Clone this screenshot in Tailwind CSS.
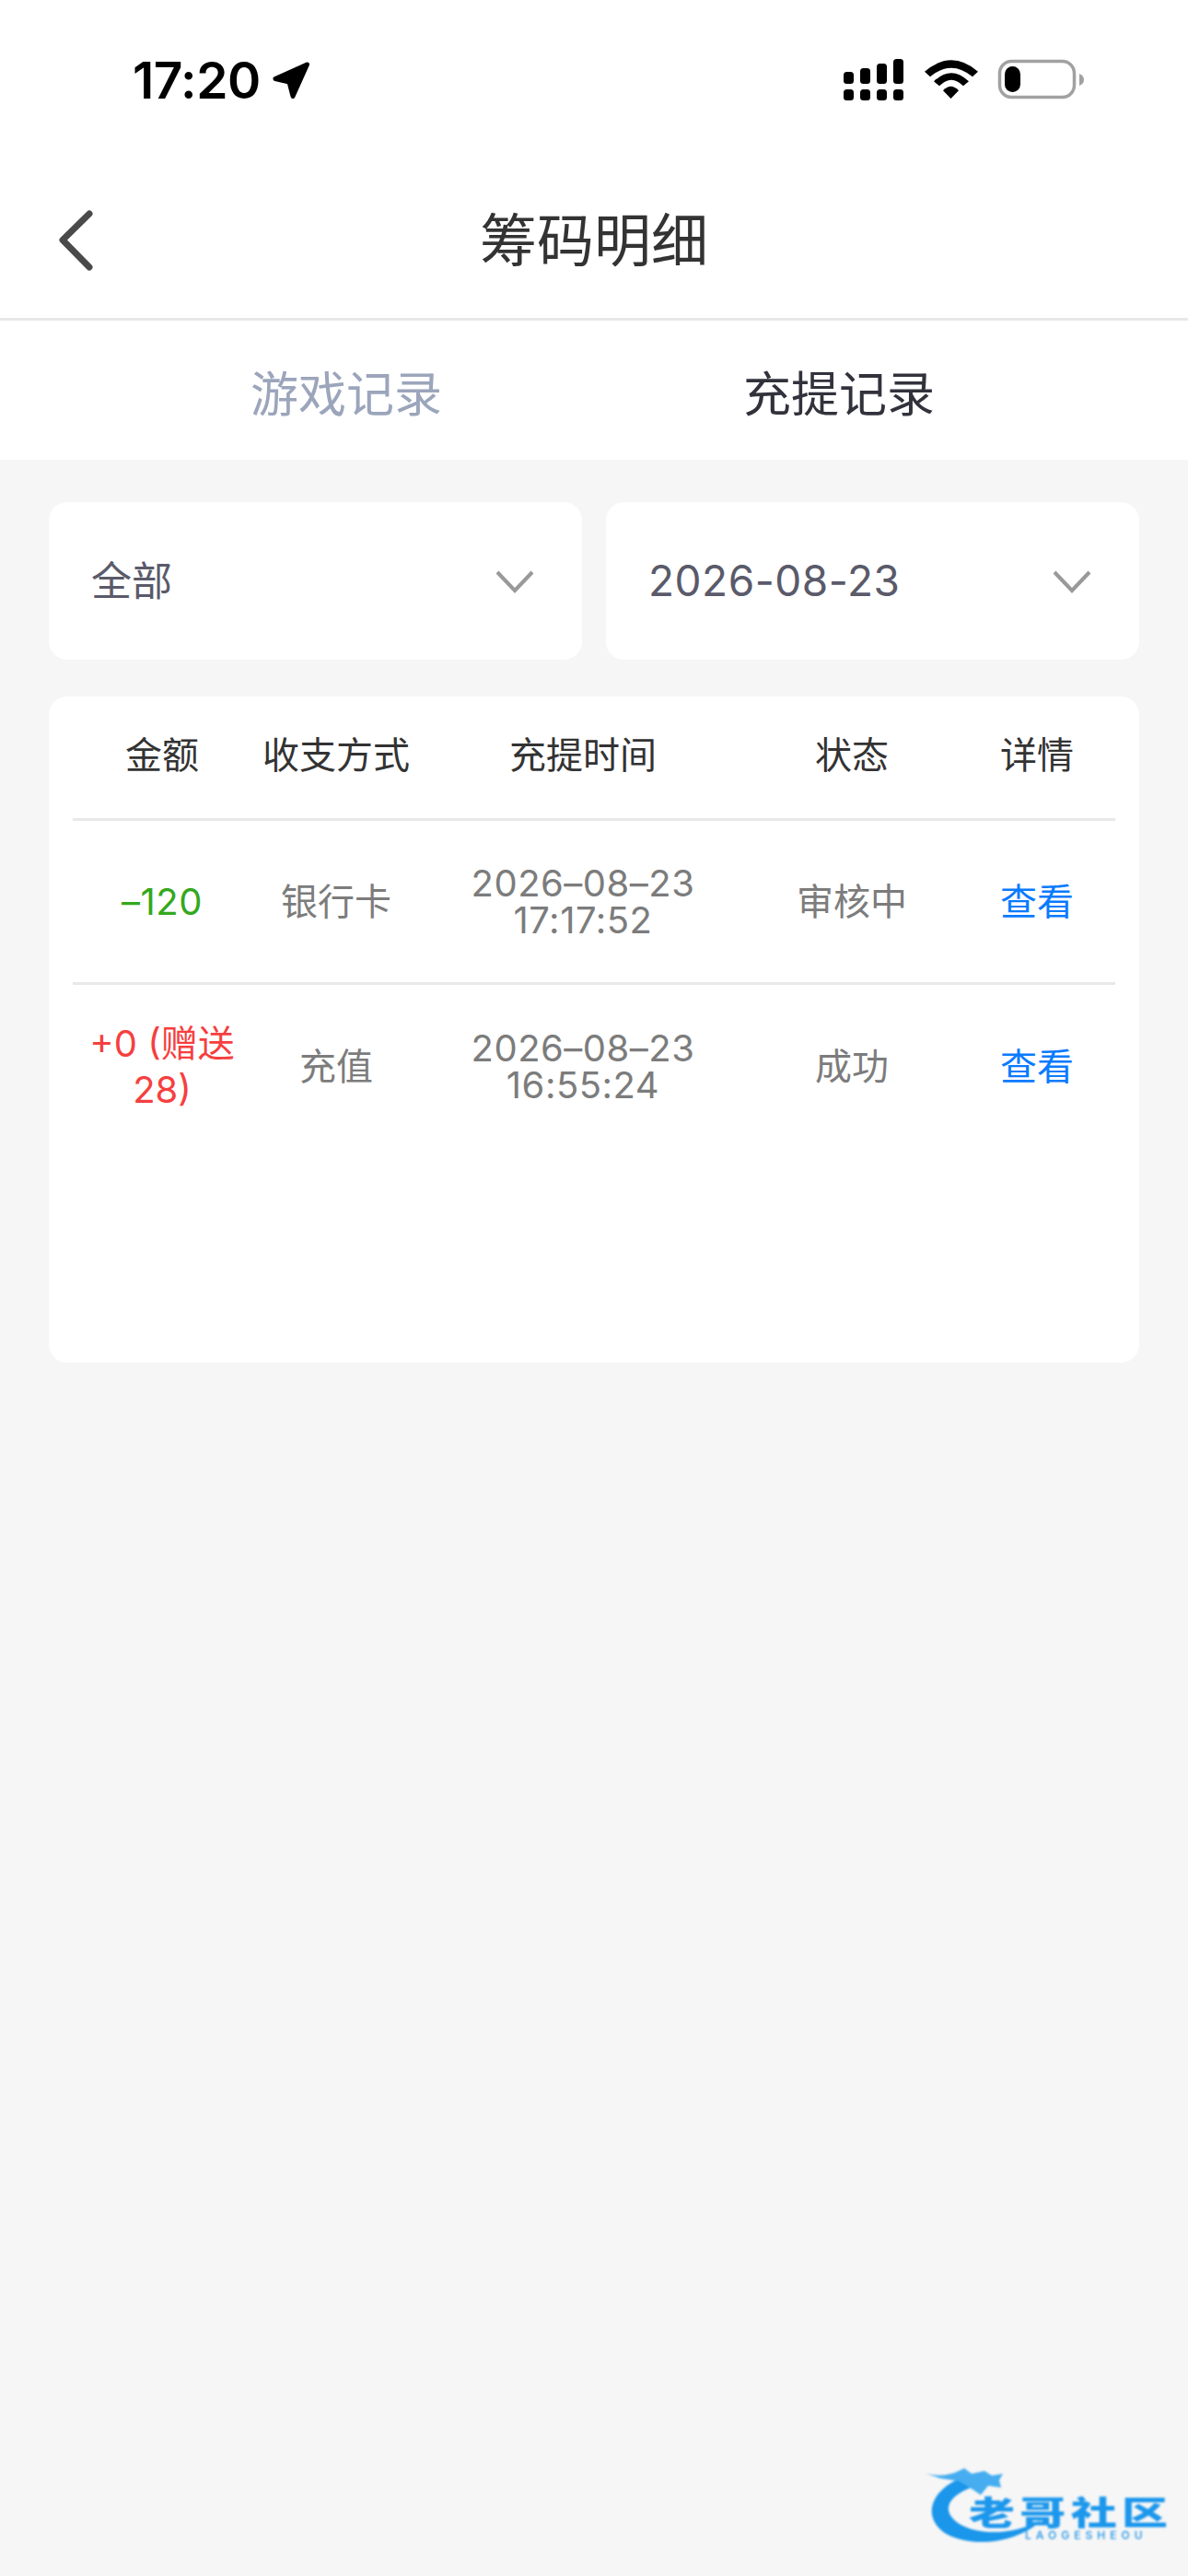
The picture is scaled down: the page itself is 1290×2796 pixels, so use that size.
<!DOCTYPE html>
<html lang="zh-CN">
<head>
<meta charset="utf-8">
<title>筹码明细</title>
<script src="https://cdn.jsdelivr.net/npm/@tailwindcss/browser@4"></script>
</head>
<body class="m-0">
<div class="relative w-[1290px] h-[2796px] overflow-hidden bg-[#f6f6f6] font-['Inter','Noto_Sans_CJK_SC',sans-serif]">
  <!-- status bar -->
  <div class="h-[176px] bg-white flex justify-between items-start pt-[64px] pl-[144px] pr-[113px]">
    <div class="flex items-center gap-[13px] h-[45px]">
      <span class="text-[55px] leading-[45px] font-semibold text-black tracking-[-0.5px] pt-[1px]">17:20</span>
      <svg width="41" height="40" viewBox="0 0 41 40" class="mt-[1px]"><path d="M37.5 3 L3 18.5 L18 22 L22 37.5 Z" fill="#000" stroke="#000" stroke-width="5" stroke-linejoin="round"/></svg>
    </div>
    <svg width="261" height="45" viewBox="0 0 261 45">
      <g fill="#000">
        <rect x="0" y="33" width="11" height="12" rx="3.5"/><rect x="18" y="33" width="11" height="12" rx="3.5"/><rect x="36" y="33" width="11" height="12" rx="3.5"/><rect x="54" y="33" width="11" height="12" rx="3.5"/>
        <rect x="0" y="14" width="11" height="13" rx="3.5"/><rect x="18" y="10" width="11" height="17" rx="3.5"/><rect x="36" y="5" width="11" height="22" rx="3.5"/><rect x="54" y="0" width="11" height="27" rx="3.5"/>
        <path d="M88 13.7 Q117 -11 146 13.7 L140 19.3 Q117 0 94 19.3 Z"/>
        <path d="M98 24.3 Q117 6 136 24.3 L130 29.3 Q117 16 104 29.3 Z"/>
        <path d="M108 34.3 Q116.5 25 125 34.3 L116.5 43 Z"/>
      </g>
      <rect x="169.5" y="2.5" width="81" height="39" rx="13" fill="none" stroke="#a1a1a1" stroke-width="3.5"/>
      <rect x="175" y="8" width="17" height="28" rx="8.5" fill="#000"/>
      <path d="M256 16 Q261 18 261 22.5 Q261 27 256 29 Z" fill="#a1a1a1"/>
    </svg>
  </div>
  <!-- nav -->
  <div class="relative h-[172px] bg-white border-b-[3px] border-[#e8e8e8] flex items-center justify-center pt-[2px]">
    <svg class="absolute left-[60px] top-[52px]" width="44" height="66" viewBox="0 0 44 66"><path d="M37 4 L8 32.5 L37 62" fill="none" stroke="#4a4a4a" stroke-width="7" stroke-linecap="round" stroke-linejoin="round"/></svg>
    <h1 class="m-0 text-[62px] leading-[70px] font-normal text-[#333333]">筹码明细</h1>
  </div>
  <!-- tabs -->
  <div class="h-[151px] bg-white flex pl-[108px]">
    <div class="w-[536px] flex items-center justify-center text-[52px] text-[#9ba5bb] pt-[10px]">游戏记录</div>
    <div class="w-[534px] flex items-center justify-center text-[52px] text-[#32323c] pt-[10px]">充提记录</div>
  </div>
  <!-- content -->
  <div class="px-[53px] pt-[46px]">
    <div class="flex gap-[26px]">
      <div class="flex-1 h-[171px] bg-white rounded-[20px] flex items-center justify-between pl-[46px] pr-[52px]">
        <span class="text-[44px] text-[#5a5a6a]">全部</span>
        <svg width="42" height="26" viewBox="0 0 42 26"><path d="M2 3 L21 23 L40 3" fill="none" stroke="#999999" stroke-width="4"/></svg>
      </div>
      <div class="flex-1 h-[171px] bg-white rounded-[20px] flex items-center justify-between pl-[46px] pr-[52px]">
        <span class="text-[46px] tracking-[0.5px] text-[#5a5a6a]">2026-08-23</span>
        <svg width="42" height="26" viewBox="0 0 42 26"><path d="M2 3 L21 23 L40 3" fill="none" stroke="#999999" stroke-width="4"/></svg>
      </div>
    </div>
    <div class="mt-[40px] h-[723px] bg-white rounded-[20px] px-[26px]">
      <div class="grid grid-cols-[194px_184px_352px_232px_170px] h-[135px] items-center text-center text-[40px] text-[#333333] border-b-[3px] border-[#e8e8e8] pb-[4px]">
        <div>金额</div><div>收支方式</div><div>充提时间</div><div>状态</div><div>详情</div>
      </div>
      <div class="grid grid-cols-[194px_184px_352px_232px_170px] h-[178px] items-center text-center text-[40px] leading-[40px] text-[#7c7c7c] border-b-[3px] border-[#e8e8e8]">
        <div class="text-[#33a81c] tracking-[0.5px]">–120</div>
        <div>银行卡</div>
        <div class="tracking-[0.5px]">2026–08–23<br>17:17:52</div>
        <div>审核中</div>
        <div class="text-[#0a7bff]">查看</div>
      </div>
      <div class="grid grid-cols-[194px_184px_352px_232px_170px] h-[178px] items-center text-center text-[40px] leading-[40px] text-[#7c7c7c]">
        <div class="text-[#f63f3f] leading-[50px]">+0 (赠送28)</div>
        <div>充值</div>
        <div class="tracking-[0.5px]">2026–08–23<br>16:55:24</div>
        <div>成功</div>
        <div class="text-[#0a7bff]">查看</div>
      </div>
    </div>
  </div>
  <!-- watermark logo -->
  <div class="absolute left-[1003px] top-[2673px] w-[265px] h-[90px] blur-[0.8px]">
    <svg class="absolute left-0 top-0" width="160" height="90" viewBox="0 0 160 90">
      <path d="M42 16 C6 30 -2 60 24 77 C54 94 105 86 128 62 C100 78 60 80 38 66 C18 52 26 36 54 26 Z" fill="#1a96ea"/>
      <path d="M0 11 C16 16 30 14 44 6 L52 12 L66 9 L74 14 L86 12 L82 19 L84 27 L70 25 L62 35 L50 27 L38 20 L18 17 Z" fill="#46adf0"/>
    </svg>
    <div class="absolute left-[49px] top-[34px] w-[216px] h-[36px] flex justify-between text-[50px] leading-[36px] font-black text-[#1c97ec] font-['Noto_Sans_CJK_SC',sans-serif] scale-y-[0.72]"><span>老</span><span>哥</span><span>社</span><span>区</span></div>
    <div class="absolute left-[110px] top-[73px] h-[12px] text-[12px] leading-[12px] tracking-[5px] font-semibold text-[#3a9fe8]">LAOGESHEOU</div>
  </div>
</div>
</body>
</html>
